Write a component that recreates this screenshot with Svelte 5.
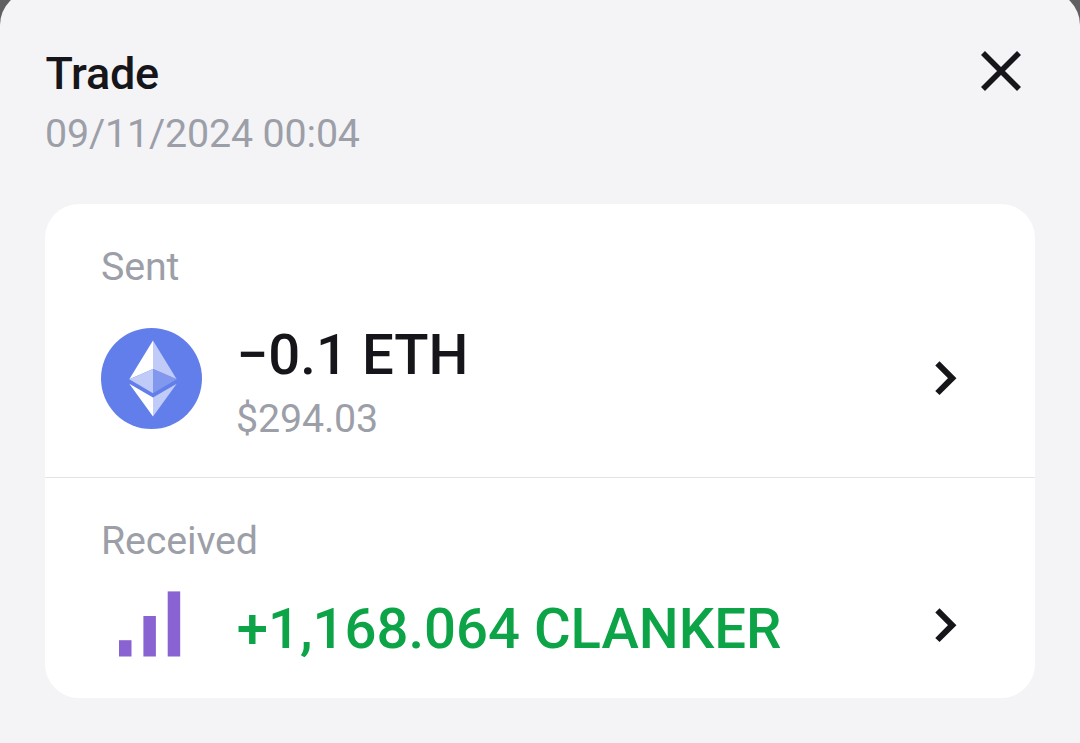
<script lang="ts">
    type Entry = {
        label: string;
        icon: 'eth' | 'bars';
        amount: string;
        value?: string;
        incoming: boolean;
    };

    const title = 'Trade';
    const date = '09/11/2024 00:04';

    const entries: Entry[] = [
        { label: 'Sent', icon: 'eth', amount: '−0.1 ETH', value: '$294.03', incoming: false },
        { label: 'Received', icon: 'bars', amount: '+1,168.064 CLANKER', incoming: true },
    ];
</script>

<main class="backdrop">
    <div class="sheet">
        <header class="sheet-header">
            <div>
                <h1>{title}</h1>
                <p class="date">{date}</p>
            </div>
            <button class="close" aria-label="Close">
                <svg width="40" height="40" viewBox="0 0 40 40">
                    <path d="M2 2 38 38M38 2 2 38" />
                </svg>
            </button>
        </header>

        <div class="card">
            {#each entries as entry}
                <section class="entry" class:compact={!entry.value}>
                    <p class="label">{entry.label}</p>
                    <div class="row">
                        {#if entry.icon === 'eth'}
                            <svg class="token" viewBox="0 0 101 101">
                                <circle cx="50.5" cy="50.5" r="50.5" fill="#627eea" />
                                <path d="M52 12.5 28.3 51.3 52 41z" fill="#fff" />
                                <path d="M52 12.5 75.7 51.3 52 41z" fill="#c0cbf7" />
                                <path d="M52 41 28.3 51.3 52 65.3z" fill="#c0cbf7" />
                                <path d="M52 41 75.7 51.3 52 65.3z" fill="#8198ee" />
                                <path d="M28.3 55.8 52 69.6V88.5z" fill="#fff" />
                                <path d="M75.7 55.8 52 69.6V88.5z" fill="#c0cbf7" />
                            </svg>
                        {:else}
                            <svg class="token" viewBox="0 0 101 101" fill="#8a63d2">
                                <rect x="18" y="65.2" width="12.5" height="16.3" />
                                <rect x="42.4" y="41" width="12.5" height="40.5" />
                                <rect x="66.7" y="16.4" width="12.5" height="65.1" />
                            </svg>
                        {/if}
                        <div class="amounts">
                            <p class="amount" class:incoming={entry.incoming}>{entry.amount}</p>
                            {#if entry.value}
                                <p class="value">{entry.value}</p>
                            {/if}
                        </div>
                        <svg class="chevron" width="22" height="36" viewBox="0 0 22 36">
                            <path d="M2.4 2.4 17.2 17.2 2.4 32" />
                        </svg>
                    </div>
                </section>
            {/each}
        </div>
    </div>
</main>

<style>
    :global(body) {
        margin: 0;
        background: #606062;
    }

    .backdrop {
        height: 743px;
        overflow: hidden;
        background: #606062;
        font-family: Roboto, sans-serif;
        color: #16161a;
    }

    .sheet {
        box-sizing: border-box;
        height: 790px;
        margin-top: -9px;
        padding: 56px 45px 0;
        border-radius: 34px 34px 0 0;
        background: #f4f4f7;
    }

    h1,
    p {
        margin: 0;
        white-space: nowrap;
    }

    .sheet-header {
        display: flex;
        justify-content: space-between;
        align-items: flex-start;
        margin-bottom: 47px;
    }

    h1 {
        padding-left: 0.5px;
        font-size: 45px;
        font-weight: 500;
        line-height: 53px;
        letter-spacing: -0.25px;
    }

    .date,
    .label,
    .value {
        font-size: 39.375px;
        line-height: 46px;
        letter-spacing: -0.15px;
        color: #9c9fa8;
    }

    .date {
        margin-top: 11px;
    }

    .close {
        display: flex;
        margin: 4px 14px 0 0;
        padding: 0;
        border: 0;
        background: none;
    }

    .close path,
    .chevron path {
        fill: none;
        stroke: #16161a;
        stroke-width: 5.6;
    }

    .chevron path {
        stroke-width: 6;
    }

    .card {
        border-radius: 34px;
        background: #fff;
    }

    .entry {
        padding: 40px 78px 35px 56px;
    }

    .entry + .entry {
        border-top: 1px solid #e3e4e8;
    }

    .entry.compact {
        padding-bottom: 22px;
    }

    .row {
        display: flex;
        align-items: center;
        gap: 34px;
        margin-top: 25px;
    }

    .compact .row {
        margin-top: 11px;
    }

    .token {
        flex: none;
        width: 101px;
        height: 101px;
    }

    .amounts {
        flex: 1;
        padding-top: 7px;
    }

    .amount {
        padding-left: 0.7px;
        font-size: 56.25px;
        font-weight: 500;
        line-height: 66px;
    }

    .amount.incoming {
        color: #0ca447;
    }

    .value {
        margin-top: 8px;
    }
</style>
